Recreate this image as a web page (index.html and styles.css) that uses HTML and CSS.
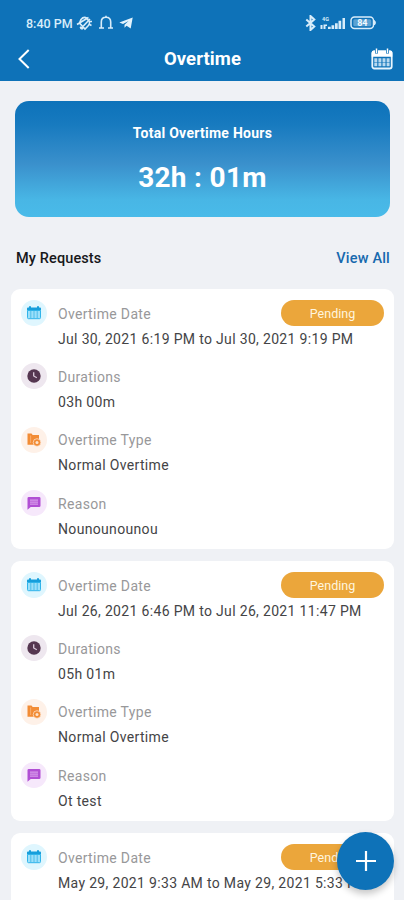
FILE: index.html
```
<!DOCTYPE html>
<html lang="en">
<head>
<meta charset="utf-8">
<title>Overtime</title>
<link rel="stylesheet" href="styles.css">
</head>
<body>
<svg class="defs" width="0" height="0" aria-hidden="true">
  <symbol id="calendar" viewBox="0 0 16 16">
    <path d="M1 5.500V3.400q0-1 1-1h1V1.200h2v1.200h6V1.200h2v1.200h1q1 0 1 1v2.100z" fill="#169edb"/>
    <path d="M1.500 5.500v7.200q0 1 1 1h11q1 0 1-1V5.500z" fill="#9be0fa" stroke="#30b4ea"/>
    <path d="M4.800 6v7M8 6v7M11.200 6v7" stroke="#45b9e9" stroke-width=".9"/>
  </symbol>
  <symbol id="clock" viewBox="0 0 16 16">
    <circle cx="8" cy="8" r="6.700" fill="#553650"/>
    <path d="M7.700 4.200V8l3.100 1.800" fill="none" stroke="#dccbdc" stroke-width="1.300"/>
  </symbol>
  <symbol id="type" viewBox="0 0 16 16">
    <path d="M1.500 1.500h4l1.200 1.400H13v6.700l-4 3.100H1.500z" fill="#f28c35"/>
    <path d="M4.600 3.500v7.500" stroke="#f9b577" stroke-width=".8"/>
    <circle cx="11" cy="10.500" r="3.800" fill="#f28c35" stroke="#fdeadb" stroke-width=".7"/>
    <circle cx="11" cy="10.500" r="1.500" fill="#fde3cc"/>
  </symbol>
  <symbol id="reason" viewBox="0 0 16 16">
    <path d="M2.800 2h10.400q1.300 0 1.300 1.300v7.400q0 1.300-1.300 1.300H4.700L1.500 14.700V3.300Q1.500 2 2.800 2z" fill="#b14fd4"/>
    <path d="M4 5.100h8M4 7.100h8M4 9.100h8" stroke="#e7b9f4" stroke-width=".9"/>
  </symbol>
</svg>
<div class="screen">
  <header class="header">
    <div class="status">
      <span class="time">8:40 PM</span>
      <svg class="mute" viewBox="0 0 17 16" fill="none" stroke="#d9edfa" stroke-width="1.600"><path d="M5 4.500Q7 2 9.500 2.500L13.500 6.500Q14 9 12 11L9 14 3.500 8zM1 9.500L12.500 2.500M4.500 14L14 4M4 12l3 2M13 6.500h3M13.500 9.500l2 1"/></svg>
      <svg class="bell" viewBox="0 0 16 16" fill="none" stroke="#d9edfa" stroke-width="1.600"><path d="M1 13h5M15 13h-5M3.300 13V7q0-4.800 4.700-4.800T12.700 7v6M8 2.500V.8"/></svg>
      <svg class="plane" viewBox="0 0 14 12"><path d="M.3 5.600L13.700.5 11.700 11.500 7.600 8.800 5.500 10.800V7.800L9.500 4 4 7z" fill="#e3f3fc"/></svg>
      <div class="status-right">
        <svg class="bluetooth" viewBox="0 0 11 16" fill="none" stroke="#d9edfa" stroke-width="2"><path d="M1.300 4.500l8 7L5.500 15V1l3.800 3.500-8 7"/></svg>
        <svg class="signal" viewBox="0 0 26 14" fill="#d9edfa"><text x="2" y="5.200" class="net">4G</text><path d="M.5 9h2v4h-2zM3.500 8.500h3.500V10H5.500v3h-2zM8 10.700h2.700V13H8zM11.500 9.200h2.700V13h-2.700zM15 7.200h2.700V13H15zM18.500 4.700h2.700V13h-2.700zM22.500 2H25v11h-2.500z"/></svg>
        <svg class="battery" viewBox="0 0 27 14"><rect x="1" y="1" width="22.500" height="11.500" rx="3.500" fill="none" stroke="#d9edfa" stroke-width="1.500"/><rect x="3.300" y="3.300" width="18" height="7" rx="1.500" fill="#5ba2d3"/><path d="M24.500 4.500q2 2 0 4.500z" fill="#d9edfa" stroke="#d9edfa"/><text x="12.300" y="10" class="level">84</text></svg>
      </div>
    </div>
    <nav class="bar">
      <svg class="back" viewBox="0 0 12 20"><path d="M10.700 1L1.500 10l9.200 9" fill="none" stroke="#fff" stroke-width="2"/></svg>
      <h1>Overtime</h1>
      <svg class="cal" viewBox="0 0 22 22"><rect x="1.300" y="3.500" width="19.400" height="17" rx="2" fill="none" stroke="#e7f5fd" stroke-width="1.800"/><path d="M.7 8.800V4.500q0-2 2-2h16.600q2 0 2 2v4.300z" fill="#fff"/><path d="M5.500 1v4.500M16.500 1v4.500" stroke="#0e72b8" stroke-width="3"/><path d="M5.500.5V5M16.500.5V5" stroke="#fff" stroke-width="1.500"/><path d="M3.300 10.300h3v3.700h-3zM7.400 10.300h3v3.700h-3zM11.500 10.300h3v3.700h-3zM15.600 10.300h3v3.700h-3zM3.300 14.500h3v3.700h-3zM7.400 14.500h3v3.700h-3zM11.500 14.500h3v3.700h-3zM15.600 14.500h3v3.700h-3z" fill="#b9daf0"/></svg>
    </nav>
  </header>
  <section class="total">
    <div class="total-label">Total Overtime Hours</div>
    <div class="total-value">32h : 01m</div>
  </section>
  <div class="section-head"><h2>My Requests</h2><a class="view">View All</a></div>
  <main class="list">
    <article class="card">
      <div class="row"><span class="icon blue"><svg><use href="#calendar"/></svg></span><span class="label">Overtime Date</span><span class="pill">Pending</span><span class="value">Jul 30, 2021 6:19 PM to Jul 30, 2021 9:19 PM</span></div>
      <div class="row"><span class="icon plum"><svg><use href="#clock"/></svg></span><span class="label">Durations</span><span class="value">03h 00m</span></div>
      <div class="row"><span class="icon orange"><svg><use href="#type"/></svg></span><span class="label">Overtime Type</span><span class="value">Normal Overtime</span></div>
      <div class="row"><span class="icon purple"><svg><use href="#reason"/></svg></span><span class="label">Reason</span><span class="value">Nounounounou</span></div>
    </article>
    <article class="card">
      <div class="row"><span class="icon blue"><svg><use href="#calendar"/></svg></span><span class="label">Overtime Date</span><span class="pill">Pending</span><span class="value">Jul 26, 2021 6:46 PM to Jul 26, 2021 11:47 PM</span></div>
      <div class="row"><span class="icon plum"><svg><use href="#clock"/></svg></span><span class="label">Durations</span><span class="value">05h 01m</span></div>
      <div class="row"><span class="icon orange"><svg><use href="#type"/></svg></span><span class="label">Overtime Type</span><span class="value">Normal Overtime</span></div>
      <div class="row"><span class="icon purple"><svg><use href="#reason"/></svg></span><span class="label">Reason</span><span class="value">Ot test</span></div>
    </article>
    <article class="card">
      <div class="row"><span class="icon blue"><svg><use href="#calendar"/></svg></span><span class="label">Overtime Date</span><span class="pill">Pending</span><span class="value">May 29, 2021 9:33 AM to May 29, 2021 5:33 PM</span></div>
    </article>
  </main>
  <button class="add" aria-label="Add"><svg viewBox="0 0 22 22"><path d="M11 1v20M1 11h20" stroke="#fff" stroke-width="2.200"/></svg></button>
</div>
</body>
</html>
```
FILE: styles.css
```
* { box-sizing: border-box; }
body { margin: 0; font-family: Roboto, "Liberation Sans", sans-serif; background: #eff1f5; }
h1, h2 { margin: 0; }
svg { display: block; flex: none; }
.defs { position: absolute; }
.screen { position: relative; height: 900px; overflow: hidden; background: #eff1f5; }
.header { height: 81px; background: #0e72b8; color: #fff; padding-top: 12px; }
.status { display: flex; align-items: center; height: 22px; padding: 0 27px 0 26px; color: #d9edfa; }
.time { width: 48px; font-size: 12.5px; font-weight: 500; white-space: nowrap; }
.mute { width: 17px; height: 16px; margin-left: 2px; }
.bell { width: 16px; height: 16px; margin-left: 5px; }
.plane { width: 14px; height: 12px; margin-left: 5px; }
.status-right { display: flex; align-items: center; margin-left: auto; }
.bluetooth { width: 11px; height: 16px; margin-right: 4px; }
.signal { width: 26px; height: 14px; margin-right: 4px; }
.battery { width: 27px; height: 14px; }
.net { font-size: 5.5px; font-weight: 700; }
.level { font-size: 9px; font-weight: 700; text-anchor: middle; fill: #f2f9fe; }
.bar { display: grid; grid-template-columns: 22px 1fr 22px; align-items: center; height: 49px; padding: 0 11px 0 18px; }
.back { width: 12px; height: 20px; }
h1 { font-size: 18.5px; line-height: 24px; font-weight: 700; letter-spacing: .1px; text-align: center; padding-top: 1px; padding-right: 6px; }
.cal { width: 22px; height: 22px; }
.total { margin: 20px 14px 0 15px; height: 116px; border-radius: 14px; background: linear-gradient(#0d72ba 0%, #177abf 20%, #3a90cc 54%, #48b6e5 85%, #49bbe9 100%); color: #fff; text-align: center; padding-top: 22px; }
.total-label { font-size: 14px; line-height: 20px; font-weight: 700; letter-spacing: .27px; }
.total-value { font-size: 28px; line-height: 34px; font-weight: 700; letter-spacing: .3px; margin-top: 18px; }
.section-head { display: flex; justify-content: space-between; align-items: center; height: 72px; padding: 12px 14px 0 16px; }
h2, .view { font-size: 14.5px; font-weight: 500; line-height: 20px; letter-spacing: .12px; }
h2 { color: #17181b; }
.view { color: #1769ae; letter-spacing: .2px; }
.list { display: grid; gap: 12px; padding: 0 10px 0 11px; }
.card { height: 260px; padding: 11px 10px 0; border-radius: 9px; background: #fff; display: flex; flex-direction: column; gap: 12.4px; }
.row { display: grid; grid-template-columns: 26px 1fr 103px; grid-template-rows: 26px 25px; column-gap: 11px; align-items: center; }
.icon { width: 26px; height: 26px; border-radius: 50%; display: grid; place-items: center; }
.icon svg { width: 16px; height: 16px; }
.blue { background: #dff6fe; }
.plum { background: #eee7ef; }
.orange { background: #fef1e8; }
.purple { background: #f6e8fb; }
.label { color: #98989a; font-size: 14px; letter-spacing: .32px; padding-top: 1px; }
.value { grid-column: 2 / 4; grid-row: 2; color: #444446; font-size: 14px; letter-spacing: .33px; white-space: nowrap; }
.pill { height: 26px; border-radius: 13px; background: #eba63b; color: #fff5df; font-size: 12.5px; line-height: 27px; text-align: center; }
.add { position: absolute; left: 337px; top: 832px; width: 57px; height: 58px; border: 0; border-radius: 50%; padding: 0; background: #0e72b8; display: grid; place-items: center; box-shadow: 0 4px 7px rgba(0, 0, 0, .22); }
.add svg { width: 22px; height: 22px; }
```
